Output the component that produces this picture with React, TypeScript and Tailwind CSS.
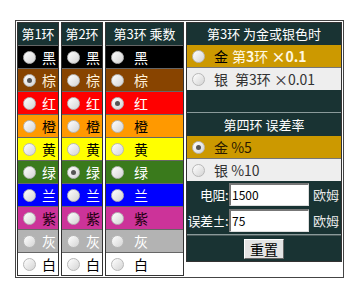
import React from 'react'

type Band = { name: string; bg: string; fg: string }

const bands: Band[] = [
  { name: '黑', bg: 'bg-[#000000]', fg: 'text-white' },
  { name: '棕', bg: 'bg-[#884400]', fg: 'text-[#fff2dd]' },
  { name: '红', bg: 'bg-[#ff0000]', fg: 'text-white' },
  { name: '橙', bg: 'bg-[#ff9900]', fg: 'text-black' },
  { name: '黄', bg: 'bg-[#ffff00]', fg: 'text-black' },
  { name: '绿', bg: 'bg-[#3a7a1c]', fg: 'text-white' },
  { name: '兰', bg: 'bg-[#0000ff]', fg: 'text-white' },
  { name: '紫', bg: 'bg-[#cc3399]', fg: 'text-[#220011]' },
  { name: '灰', bg: 'bg-[#b3b3b3]', fg: 'text-white' },
  { name: '白', bg: 'bg-white', fg: 'text-black' },
]

function Radio({ checked }: { checked?: boolean }) {
  return (
    <span className="flex h-[13px] w-[13px] shrink-0 items-center justify-center rounded-full border border-[#b8b8b8] bg-gradient-to-br from-white to-[#d4d4d4]">
      {checked && <span className="h-[5px] w-[5px] rounded-full bg-[#555]" />}
    </span>
  )
}

function BandColumn({
  title,
  selected,
  width,
  padLeft,
  textGap,
}: {
  title: string
  selected: number
  width: string
  padLeft: string
  textGap: string
}) {
  return (
    <div className={`flex ${width} flex-col gap-px border border-[#333] bg-[#666]`}>
      <div className="flex h-[22px] items-center justify-center bg-[#193333] text-[13px] text-white">
        {title}
      </div>
      {bands.map((b, i) => (
        <div key={b.name} className={`flex h-[22px] items-center ${padLeft} ${b.bg}`}>
          <Radio checked={i === selected} />
          <span className={`${textGap} text-[14px] leading-none ${b.fg}`}>{b.name}</span>
        </div>
      ))}
    </div>
  )
}

function OptRow({
  gold,
  checked,
  children,
}: {
  gold?: boolean
  checked?: boolean
  children: React.ReactNode
}) {
  return (
    <div
      className={`flex h-[22px] items-center pl-[5px] text-[14px] leading-none ${
        gold ? 'bg-[#cc9900]' : 'bg-[#eeeeee]'
      }`}
    >
      <Radio checked={checked} />
      <span className="ml-[9px] flex items-center whitespace-nowrap">{children}</span>
    </div>
  )
}

function Field({ label, value }: { label: string; value: string }) {
  return (
    <div className="flex h-[26px] items-center whitespace-nowrap text-[14px] text-white">
      <span className="w-[41px] flex-none text-right text-[13px] leading-none tracking-[-0.5px]">{label}</span>
      <div className="ml-[1px] flex h-[23px] w-[80px] flex-none items-center border-t-2 border-l-2 border-b border-r border-t-[#777] border-l-[#777] border-b-[#ddd] border-r-[#ddd] bg-white pl-[1px] text-[12px] text-black">
        {value}
      </div>
      <span className="ml-[4px] flex-none text-[13px] leading-none text-[#e8e8e8]">欧姆</span>
    </div>
  )
}

export default function App() {
  return (
    <div
      className="h-[287px] w-[354px] bg-white pl-[15px] pt-[20px]"
      style={{ fontFamily: '"Noto Sans CJK SC", "DejaVu Sans", sans-serif' }}
    >
      <div className="flex w-fit items-start gap-[2px] border border-[#444] bg-white p-px">
        <BandColumn title="第1环" selected={1} width="w-[42px]" padLeft="pl-[5px]" textGap="ml-[6px]" />
        <BandColumn title="第2环" selected={5} width="w-[42px]" padLeft="pl-[5px]" textGap="ml-[6px]" />
        <BandColumn title="第3环 乘数" selected={2} width="w-[79px]" padLeft="pl-[5px]" textGap="ml-[10px]" />

        <div className="flex w-[156px] flex-col border border-[#333] bg-[#193333]">
          <div className="flex h-[22px] items-center justify-center text-[13px] text-white">
            第3环 为金或银色时
          </div>
          <div className="flex flex-col gap-px bg-[#777]">
            <OptRow gold>
              <span className="text-black">金</span>
              <span className="ml-[4px] text-[#fff8e0]">
                第<b>3</b>环 <b>×0.1</b>
              </span>
            </OptRow>
            <OptRow>
              <span className="text-[#333]">银</span>
              <span className="ml-[7px] text-[#333]">第3环 ×0.01</span>
            </OptRow>
          </div>
          <div className="h-[22px]" />
          <div className="h-px bg-[#8a9a9a]" />
          <div className="flex h-[23px] items-center justify-center text-[13px] text-white">
            第四环 误差率
          </div>
          <div className="flex flex-col gap-px bg-[#777]">
            <OptRow gold checked>
              <span className="text-[#2a1a00]">金 %5</span>
            </OptRow>
            <OptRow>
              <span className="text-[#333]">银 %10</span>
            </OptRow>
          </div>
          <Field label="电阻:" value="1500" />
          <Field label="误差±:" value="75" />
          <div className="mt-[1px] h-[2px] border-t border-b border-t-[#8a9a9a] border-b-[#4a5a5a]" />
          <div className="flex h-[25px] items-center justify-center">
            <button
              type="button"
              className="h-[20px] w-[40px] border border-t-white border-l-white border-b-[#666] border-r-[#666] bg-[#e4e4e4] text-[14px] leading-none text-black"
            >
              重置
            </button>
          </div>
        </div>
      </div>
    </div>
  )
}
